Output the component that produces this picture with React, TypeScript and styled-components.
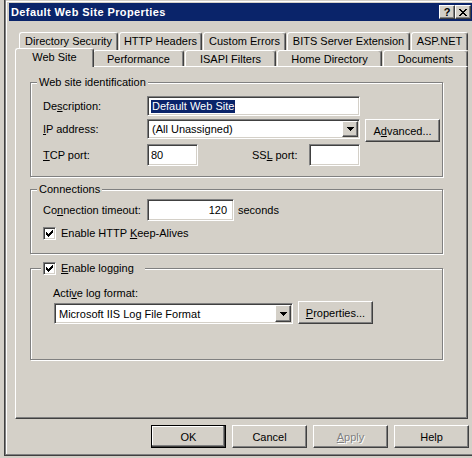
import React from "react";
import styled, { createGlobalStyle, css } from "styled-components";

const Global = createGlobalStyle`
  html, body { margin: 0; padding: 0; background: #d4d0c8; }
  body { font-family: "Liberation Sans", Arial, sans-serif; font-size: 11px; color: #000; }
  * { box-sizing: border-box; }
`;

const raised = css`
  border: 1px solid;
  border-color: #fff #404040 #404040 #fff;
  box-shadow: inset -1px -1px 0 #808080;
  background: #d4d0c8;
`;

const sunken = css`
  border: 1px solid;
  border-color: #808080 #fff #fff #808080;
  box-shadow: inset 1px 1px 0 #404040, inset -1px -1px 0 #d4d0c8;
  background: #fff;
`;

const Screen = styled.div`
  width: 472px;
  height: 458px;
  overflow: hidden;
  background: #d4d0c8;
  padding-left: 4px;
`;

const Window = styled.div`
  width: 474px;
  height: 456px;
  border-left: 1px solid #404040;
  border-bottom: 1px solid #404040;
  padding: 3px 4px 0 4px;
  background: #d4d0c8;
  box-shadow: inset 1px 0 0 #808080, inset 0 -1px 0 #808080, inset 0 1px 0 #d4d0c8,
    inset 2px 0 0 #fff, inset 0 2px 0 #fff;
  display: flex;
  flex-direction: column;
`;

const TitleBar = styled.div`
  height: 18px;
  background: #0a246a;
  color: #fff;
  display: flex;
  align-items: flex-start;
  padding: 0 3px 0 2px;
`;

const TitleText = styled.div`
  flex: 1;
  font-weight: bold;
  font-size: 11px;
  letter-spacing: 0.4px;
  line-height: 18px;
  white-space: nowrap;
`;

const CaptionButton = styled.div`
  ${raised};
  width: 16px;
  height: 14px;
  margin-top: 2px;
  display: flex;
  align-items: center;
  justify-content: center;
  color: #000;
  font-weight: bold;
  font-size: 11px;
  line-height: 12px;
`;

const TabControl = styled.div`
  margin: 11px 0 0 6px;
  width: 453px;
  display: flex;
  flex-direction: column;
`;

const TabRow = styled.div<{ $indent: number; $h: number }>`
  display: flex;
  gap: 1px;
  margin-left: ${(p) => p.$indent}px;
  height: ${(p) => p.$h}px;
  align-items: flex-start;
`;

const Tab = styled.div<{ $w: number; $h: number; $active?: boolean }>`
  width: ${(p) => (p.$active ? p.$w + 4 : p.$w)}px;
  height: ${(p) => (p.$active ? p.$h + 3 : p.$h)}px;
  flex: none;
  background: #d4d0c8;
  border-left: 1px solid #fff;
  border-top: 1px solid #fff;
  border-right: 1px solid #404040;
  box-shadow: inset -1px 0 0 #808080;
  border-radius: 3px 3px 0 0;
  padding-top: 1px;
  line-height: 14px;
  text-align: center;
  white-space: nowrap;
  ${(p) =>
    p.$active &&
    css`
      margin: -2px -2px 0 -2px;
      position: relative;
      z-index: 1;
    `}
`;

const Panel = styled.div`
  width: 453px;
  height: 353px;
  border-left: 1px solid #fff;
  border-top: 1px solid #fff;
  border-right: 1px solid #404040;
  border-bottom: 1px solid #404040;
  box-shadow: inset -1px -1px 0 #808080;
  padding: 15px 0 0 14px;
  display: flex;
  flex-direction: column;
`;

const Group = styled.div<{ $mt: number }>`
  width: 413px;
  margin-top: ${(p) => p.$mt}px;
  border: 1px solid #808080;
  box-shadow: inset 1px 1px 0 #fff, 1px 1px 0 #fff;
  display: flex;
  flex-direction: column;
`;

const Legend = styled.div<{ $left: number; $padR?: number }>`
  align-self: flex-start;
  display: flex;
  align-items: center;
  gap: 5px;
  height: 13px;
  line-height: 13px;
  margin: -7px 0 -6px ${(p) => p.$left}px;
  padding: 0 ${(p) => p.$padR ?? 2}px 0 2px;
  background: #d4d0c8;
  white-space: nowrap;
`;

const GroupBody = styled.div<{ $pad: string }>`
  padding: ${(p) => p.$pad};
  display: flex;
  flex-direction: column;
`;

const Row = styled.div<{ $mt?: number; $align?: string }>`
  display: flex;
  align-items: ${(p) => p.$align ?? "center"};
  margin-top: ${(p) => p.$mt ?? 0}px;
`;

const Label = styled.div<{ $w?: number; $lh?: number; $ml?: number }>`
  width: ${(p) => (p.$w ? `${p.$w}px` : "auto")};
  flex: none;
  line-height: ${(p) => p.$lh ?? 20}px;
  margin-left: ${(p) => p.$ml ?? 0}px;
  white-space: nowrap;
`;

const TextBox = styled.div<{ $w: number; $h: number; $right?: boolean }>`
  ${sunken};
  width: ${(p) => p.$w}px;
  height: ${(p) => p.$h}px;
  flex: none;
  display: flex;
  align-items: center;
  justify-content: ${(p) => (p.$right ? "flex-end" : "flex-start")};
  padding: ${(p) => (p.$right ? "0 6px 0 0" : "0 0 0 3px")};
  white-space: nowrap;
`;

const Selection = styled.span`
  background: #0a246a;
  color: #fff;
  line-height: 13px;
  padding: 0 1px;
`;

const Combo = styled.div<{ $w: number; $h: number; $ml?: number }>`
  ${sunken};
  width: ${(p) => p.$w}px;
  height: ${(p) => p.$h}px;
  margin-left: ${(p) => p.$ml ?? 0}px;
  flex: none;
  display: flex;
  align-items: stretch;
`;

const ComboText = styled.div`
  flex: 1;
  display: flex;
  align-items: center;
  padding-left: 4px;
  white-space: nowrap;
`;

const DropButton = styled.div`
  ${raised};
  width: 16px;
  margin: 1px 1px 1px 0;
  display: flex;
  align-items: center;
  justify-content: center;
`;

const Button = styled.div<{ $ml?: number; $default?: boolean; $disabled?: boolean }>`
  ${raised};
  width: 75px;
  height: 23px;
  flex: none;
  margin-left: ${(p) => p.$ml ?? 0}px;
  display: flex;
  align-items: center;
  justify-content: center;
  white-space: nowrap;
  ${(p) =>
    p.$default &&
    css`
      border-color: #000;
      box-shadow: inset -1px -1px 0 #404040, inset -2px -2px 0 #808080, inset 1px 1px 0 #fff;
    `}
  ${(p) =>
    p.$disabled &&
    css`
      color: #808080;
      text-shadow: 1px 1px 0 #fff;
    `}
`;

const CheckBoxBox = styled.div`
  ${sunken};
  width: 13px;
  height: 13px;
  flex: none;
  display: flex;
  align-items: center;
  justify-content: center;
`;

const CheckRow = styled.div<{ $mt?: number }>`
  display: flex;
  align-items: center;
  gap: 5px;
  margin-top: ${(p) => p.$mt ?? 0}px;
  line-height: 13px;
`;

const ButtonBar = styled.div`
  display: flex;
  justify-content: flex-end;
  gap: 6px;
  margin-top: 6px;
  padding-right: 5px;
`;

const Key = styled.span`
  text-decoration: underline;
  text-underline-offset: 1px;
`;

const Check = () => (
  <svg width="7" height="7" viewBox="0 0 7 7" shapeRendering="crispEdges">
    {[2, 3, 4, 3, 2, 1, 0].map((y, x) => (
      <rect key={x} x={x} y={y} width="1" height="3" fill="#000" />
    ))}
  </svg>
);

const CheckBox = () => (
  <CheckBoxBox>
    <Check />
  </CheckBoxBox>
);

const DownArrow = () => (
  <svg width="7" height="4" viewBox="0 0 7 4" shapeRendering="crispEdges">
    <rect x="0" y="0" width="7" height="1" fill="#000" />
    <rect x="1" y="1" width="5" height="1" fill="#000" />
    <rect x="2" y="2" width="3" height="1" fill="#000" />
    <rect x="3" y="3" width="1" height="1" fill="#000" />
  </svg>
);

const CloseGlyph = () => {
  const px: [number, number, number][] = [
    [0, 0, 2], [6, 0, 2],
    [1, 1, 2], [5, 1, 2],
    [2, 2, 4],
    [3, 3, 2],
    [2, 4, 4],
    [1, 5, 2], [5, 5, 2],
    [0, 6, 2], [6, 6, 2],
  ];
  return (
    <svg width="8" height="7" viewBox="0 0 8 7" shapeRendering="crispEdges">
      {px.map(([x, y, w], i) => (
        <rect key={i} x={x} y={y} width={w} height="1" fill="#000" />
      ))}
    </svg>
  );
};

const ComboBox = ({ w, h, ml, text }: { w: number; h: number; ml?: number; text: string }) => (
  <Combo $w={w} $h={h} $ml={ml}>
    <ComboText>{text}</ComboText>
    <DropButton>
      <DownArrow />
    </DropButton>
  </Combo>
);

const backTabs: [string, number][] = [
  ["Directory Security", 99],
  ["HTTP Headers", 83],
  ["Custom Errors", 83],
  ["BITS Server Extension", 123],
  ["ASP.NET", 57],
];

const frontTabs: [string, number, boolean][] = [
  ["Web Site", 75, true],
  ["Performance", 91, false],
  ["ISAPI Filters", 91, false],
  ["Home Directory", 105, false],
  ["Documents", 85, false],
];

export default function App() {
  return (
    <>
      <Global />
      <Screen>
        <Window>
          <TitleBar>
            <TitleText>Default Web Site Properties</TitleText>
            <CaptionButton>?</CaptionButton>
            <CaptionButton>
              <CloseGlyph />
            </CaptionButton>
          </TitleBar>

          <TabControl>
            <TabRow $indent={4} $h={18}>
              {backTabs.map(([t, w]) => (
                <Tab key={t} $w={w} $h={18}>
                  {t}
                </Tab>
              ))}
            </TabRow>
            <TabRow $indent={2} $h={16}>
              {frontTabs.map(([t, w, a]) => (
                <Tab key={t} $w={w} $h={16} $active={a}>
                  {t}
                </Tab>
              ))}
            </TabRow>

            <Panel>
              <Group $mt={0}>
                <Legend $left={6}>Web site identification</Legend>
                <GroupBody $pad="13px 0 10px 12px">
                  <Row>
                    <Label $w={104}>
                      De<Key>s</Key>cription:
                    </Label>
                    <TextBox $w={213} $h={20}>
                      <Selection>Default Web Site</Selection>
                    </TextBox>
                  </Row>
                  <Row $mt={3} $align="flex-start">
                    <Label $w={104}>
                      <Key>I</Key>P address:
                    </Label>
                    <ComboBox w={213} h={20} text="(All Unassigned)" />
                    <Button $ml={5}>
                      A<Key>d</Key>vanced...
                    </Button>
                  </Row>
                  <Row $mt={2}>
                    <Label $w={104}>
                      <Key>T</Key>CP port:
                    </Label>
                    <TextBox $w={51} $h={22}>
                      80
                    </TextBox>
                    <Label $w={57} $ml={54}>
                      SS<Key>L</Key> port:
                    </Label>
                    <TextBox $w={51} $h={22} />
                  </Row>
                </GroupBody>
              </Group>

              <Group $mt={12}>
                <Legend $left={6}>Connections</Legend>
                <GroupBody $pad="9px 0 13px 12px">
                  <Row>
                    <Label $w={104}>
                      Co<Key>n</Key>nection timeout:
                    </Label>
                    <TextBox $w={87} $h={22} $right>
                      120
                    </TextBox>
                    <Label $ml={4}>seconds</Label>
                  </Row>
                  <CheckRow $mt={6}>
                    <CheckBox />
                    <span>
                      Enable HTTP <Key>K</Key>eep-Alives
                    </span>
                  </CheckRow>
                </GroupBody>
              </Group>

              <Group $mt={14}>
                <Legend $left={10} $padR={11}>
                  <CheckBox />
                  <span>
                    <Key>E</Key>nable logging
                  </span>
                </Legend>
                <GroupBody $pad="18px 0 35px 22px">
                  <Label $lh={13}>
                    Acti<Key>v</Key>e log format:
                  </Label>
                  <Row $mt={1} $align="flex-end">
                    <ComboBox w={239} h={21} ml={1} text="Microsoft IIS Log File Format" />
                    <Button $ml={5}>
                      <Key>P</Key>roperties...
                    </Button>
                  </Row>
                </GroupBody>
              </Group>
            </Panel>
          </TabControl>

          <ButtonBar>
            <Button $default>OK</Button>
            <Button>Cancel</Button>
            <Button $disabled>
              <Key>A</Key>pply
            </Button>
            <Button>Help</Button>
          </ButtonBar>
        </Window>
      </Screen>
    </>
  );
}
